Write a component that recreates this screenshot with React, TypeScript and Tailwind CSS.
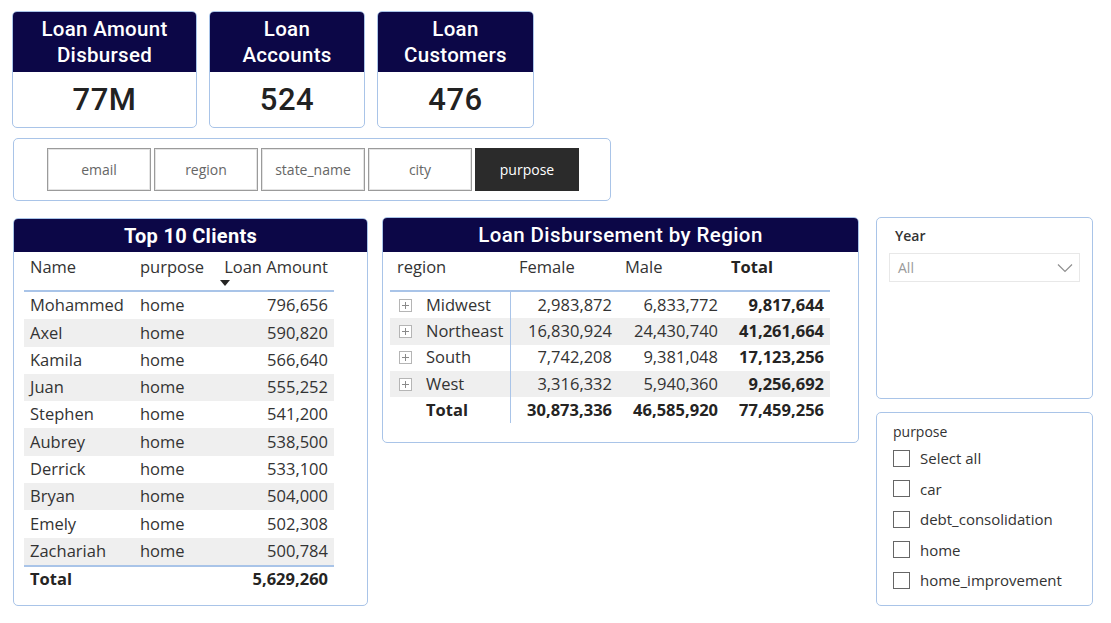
import React from "react";

const NAVY = "bg-[#0c0747]";
const HEAD_FONT = { fontFamily: "Roboto, 'DejaVu Sans', sans-serif" };
const BODY_FONT = { fontFamily: "'Open Sans', 'Noto Sans', sans-serif" };

const kpis = [
  { title: ["Loan Amount", "Disbursed"], value: "77M", w: "w-[185px]" },
  { title: ["Loan", "Accounts"], value: "524", w: "w-[156px]" },
  { title: ["Loan", "Customers"], value: "476", w: "w-[157px]" },
];

const tabs = ["email", "region", "state_name", "city", "purpose"];

const clients = [
  ["Mohammed", "796,656"],
  ["Axel", "590,820"],
  ["Kamila", "566,640"],
  ["Juan", "555,252"],
  ["Stephen", "541,200"],
  ["Aubrey", "538,500"],
  ["Derrick", "533,100"],
  ["Bryan", "504,000"],
  ["Emely", "502,308"],
  ["Zachariah", "500,784"],
];

const regions = [
  ["Midwest", "2,983,872", "6,833,772", "9,817,644"],
  ["Northeast", "16,830,924", "24,430,740", "41,261,664"],
  ["South", "7,742,208", "9,381,048", "17,123,256"],
  ["West", "3,316,332", "5,940,360", "9,256,692"],
];

const purposes = ["Select all", "car", "debt_consolidation", "home", "home_improvement"];

function PlusBox() {
  return (
    <span className="w-[13px] h-[13px] border border-[#b5b5b5] bg-white flex items-center justify-center shrink-0">
      <svg width="9" height="9" viewBox="0 0 9 9">
        <path d="M4.5 1v7M1 4.5h7" stroke="#8a8a8a" strokeWidth="1" />
      </svg>
    </span>
  );
}

export default function App() {
  return (
    <div className="w-[1111px] h-[623px] bg-white overflow-hidden text-[#252423]" style={BODY_FONT}>
      {/* KPI cards */}
      <div className="flex gap-[12px] pl-[12px] pt-[11px]">
        {kpis.map((k) => (
          <div key={k.value} className={`${k.w} h-[117px] rounded-[5px] border border-[#a9c4e8] overflow-hidden flex flex-col`}>
            <div className={`${NAVY} h-[60px] flex flex-col items-center justify-center text-white font-medium text-[20.5px] leading-[26px] tracking-[0.3px]`} style={HEAD_FONT}>
              {k.title.map((t) => (
                <span key={t}>{t}</span>
              ))}
            </div>
            <div className="flex-1 flex items-center justify-center text-[31px] font-medium text-[#222] tracking-[0.5px] pt-[2px]" style={HEAD_FONT}>
              {k.value}
            </div>
          </div>
        ))}
      </div>

      {/* tab slicer */}
      <div className="ml-[13px] mt-[10px] w-[598px] h-[63px] rounded-[5px] border border-[#a9c4e8] flex items-center pl-[33px] gap-[3px]">
        {tabs.map((t) => {
          const active = t === "purpose";
          return (
            <div
              key={t}
              className={`w-[104px] h-[43px] flex items-center justify-center text-[14px] border ${
                active
                  ? "bg-[#2b2b2b] border-[#2b2b2b] text-white"
                  : "bg-white border-[#9b9b9b] text-[#666] shadow-[inset_0_0_0_1px_#e4e4e4]"
              }`}
            >
              {t}
            </div>
          );
        })}
      </div>

      {/* bottom section */}
      <div className="flex items-start mt-[17px] ml-[13px]">
        {/* Top 10 Clients */}
        <div className="w-[355px] h-[388px] rounded-[5px] border border-[#a9c4e8] overflow-hidden">
          <div className={`${NAVY} h-[33px] flex items-center justify-center text-white text-[20px] font-bold tracking-[0.3px]`} style={HEAD_FONT}>
            Top 10 Clients
          </div>
          <div className="ml-[10px] w-[310px] text-[16.5px] text-[#333]">
            <div className="h-[40px] flex items-start pt-[3px] border-b-2 border-[#a9c4e8]">
              <span className="w-[116px] pl-[6px]">Name</span>
              <span className="w-[79px]">purpose</span>
              <span className="flex-1 relative pr-[6px] text-right">
                Loan Amount
                <svg className="absolute left-[1px] top-[25px]" width="10" height="6" viewBox="0 0 10 6">
                  <path d="M0 0h10L5 6z" fill="#252423" />
                </svg>
              </span>
            </div>
            {clients.map(([n, v], i) => (
              <div key={n} className={`h-[27.3px] flex items-center ${i % 2 === 1 ? "bg-[#efefef]" : ""}`}>
                <span className="w-[116px] pl-[6px]">{n}</span>
                <span className="w-[79px]">home</span>
                <span className="flex-1 text-right pr-[6px]">{v}</span>
              </div>
            ))}
            <div className="border-t-2 border-[#a9c4e8] h-[27px] flex items-center font-bold text-[#252423]">
              <span className="w-[195px] pl-[6px]">Total</span>
              <span className="flex-1 text-right pr-[6px]">5,629,260</span>
            </div>
          </div>
        </div>

        {/* Loan Disbursement by Region */}
        <div className="ml-[14px] -mt-[1px] w-[477px] h-[226px] rounded-[5px] border border-[#a9c4e8] overflow-hidden">
          <div className={`${NAVY} h-[34px] flex items-center justify-center text-white text-[20.5px] font-medium tracking-[0.4px]`} style={HEAD_FONT}>
            Loan Disbursement by Region
          </div>
          <div className="ml-[7px] w-[440px] text-[16.5px] text-[#333]">
            <div className="h-[40px] flex items-start pt-[3px] border-b-2 border-[#a9c4e8]">
              <span className="w-[121px] pl-[7px]">region</span>
              <span className="w-[106px] pl-[8px]">Female</span>
              <span className="w-[106px] pl-[8px]">Male</span>
              <span className="flex-1 pl-[8px] font-bold text-[#252423]">Total</span>
            </div>
            {regions.map(([r, f, m, t], i) => (
              <div key={r} className={`h-[26.3px] flex items-center ${i % 2 === 1 ? "bg-[#efefef]" : ""}`}>
                <span className="w-[121px] h-full flex items-center gap-[14px] pl-[9px] border-r border-[#a9c4e8]">
                  <PlusBox />
                  {r}
                </span>
                <span className="w-[106px] text-right pr-[5px]">{f}</span>
                <span className="w-[106px] text-right pr-[5px]">{m}</span>
                <span className="flex-1 text-right pr-[6px] font-bold text-[#252423]">{t}</span>
              </div>
            ))}
            <div className="h-[26px] flex items-center font-bold text-[#252423]">
              <span className="w-[121px] h-full flex items-center pl-[36px] border-r border-[#a9c4e8]">Total</span>
              <span className="w-[106px] text-right pr-[5px]">30,873,336</span>
              <span className="w-[106px] text-right pr-[5px]">46,585,920</span>
              <span className="flex-1 text-right pr-[6px]">77,459,256</span>
            </div>
          </div>
        </div>

        {/* right slicers */}
        <div className="ml-[17px] -mt-[1px] flex flex-col gap-[13px]">
          <div className="w-[217px] h-[182px] rounded-[5px] border border-[#a9c4e8] pt-[7px] px-[12px]">
            <div className="text-[14px] font-semibold text-[#333] pl-[6px]">Year</div>
            <div className="mt-[7px] h-[29px] border border-[#e8e8e8] flex items-center justify-between pl-[8px] pr-[6px]">
              <span className="text-[14px] text-[#9a9a9a]">All</span>
              <svg width="16" height="10" viewBox="0 0 16 10">
                <path d="M1 1.5l7 7 7-7" fill="none" stroke="#8f8f8f" strokeWidth="1.2" />
              </svg>
            </div>
          </div>
          <div className="w-[217px] h-[194px] rounded-[5px] border border-[#a9c4e8] pt-[8px] pl-[16px]">
            <div className="text-[14px] text-[#333] mb-[1px]">purpose</div>
            {purposes.map((p) => (
              <div key={p} className="h-[30.5px] flex items-center gap-[10px] text-[15px] text-[#333]">
                <span className="w-[17px] h-[17px] border border-[#666] bg-white" />
                {p}
              </div>
            ))}
          </div>
        </div>
      </div>
    </div>
  );
}
